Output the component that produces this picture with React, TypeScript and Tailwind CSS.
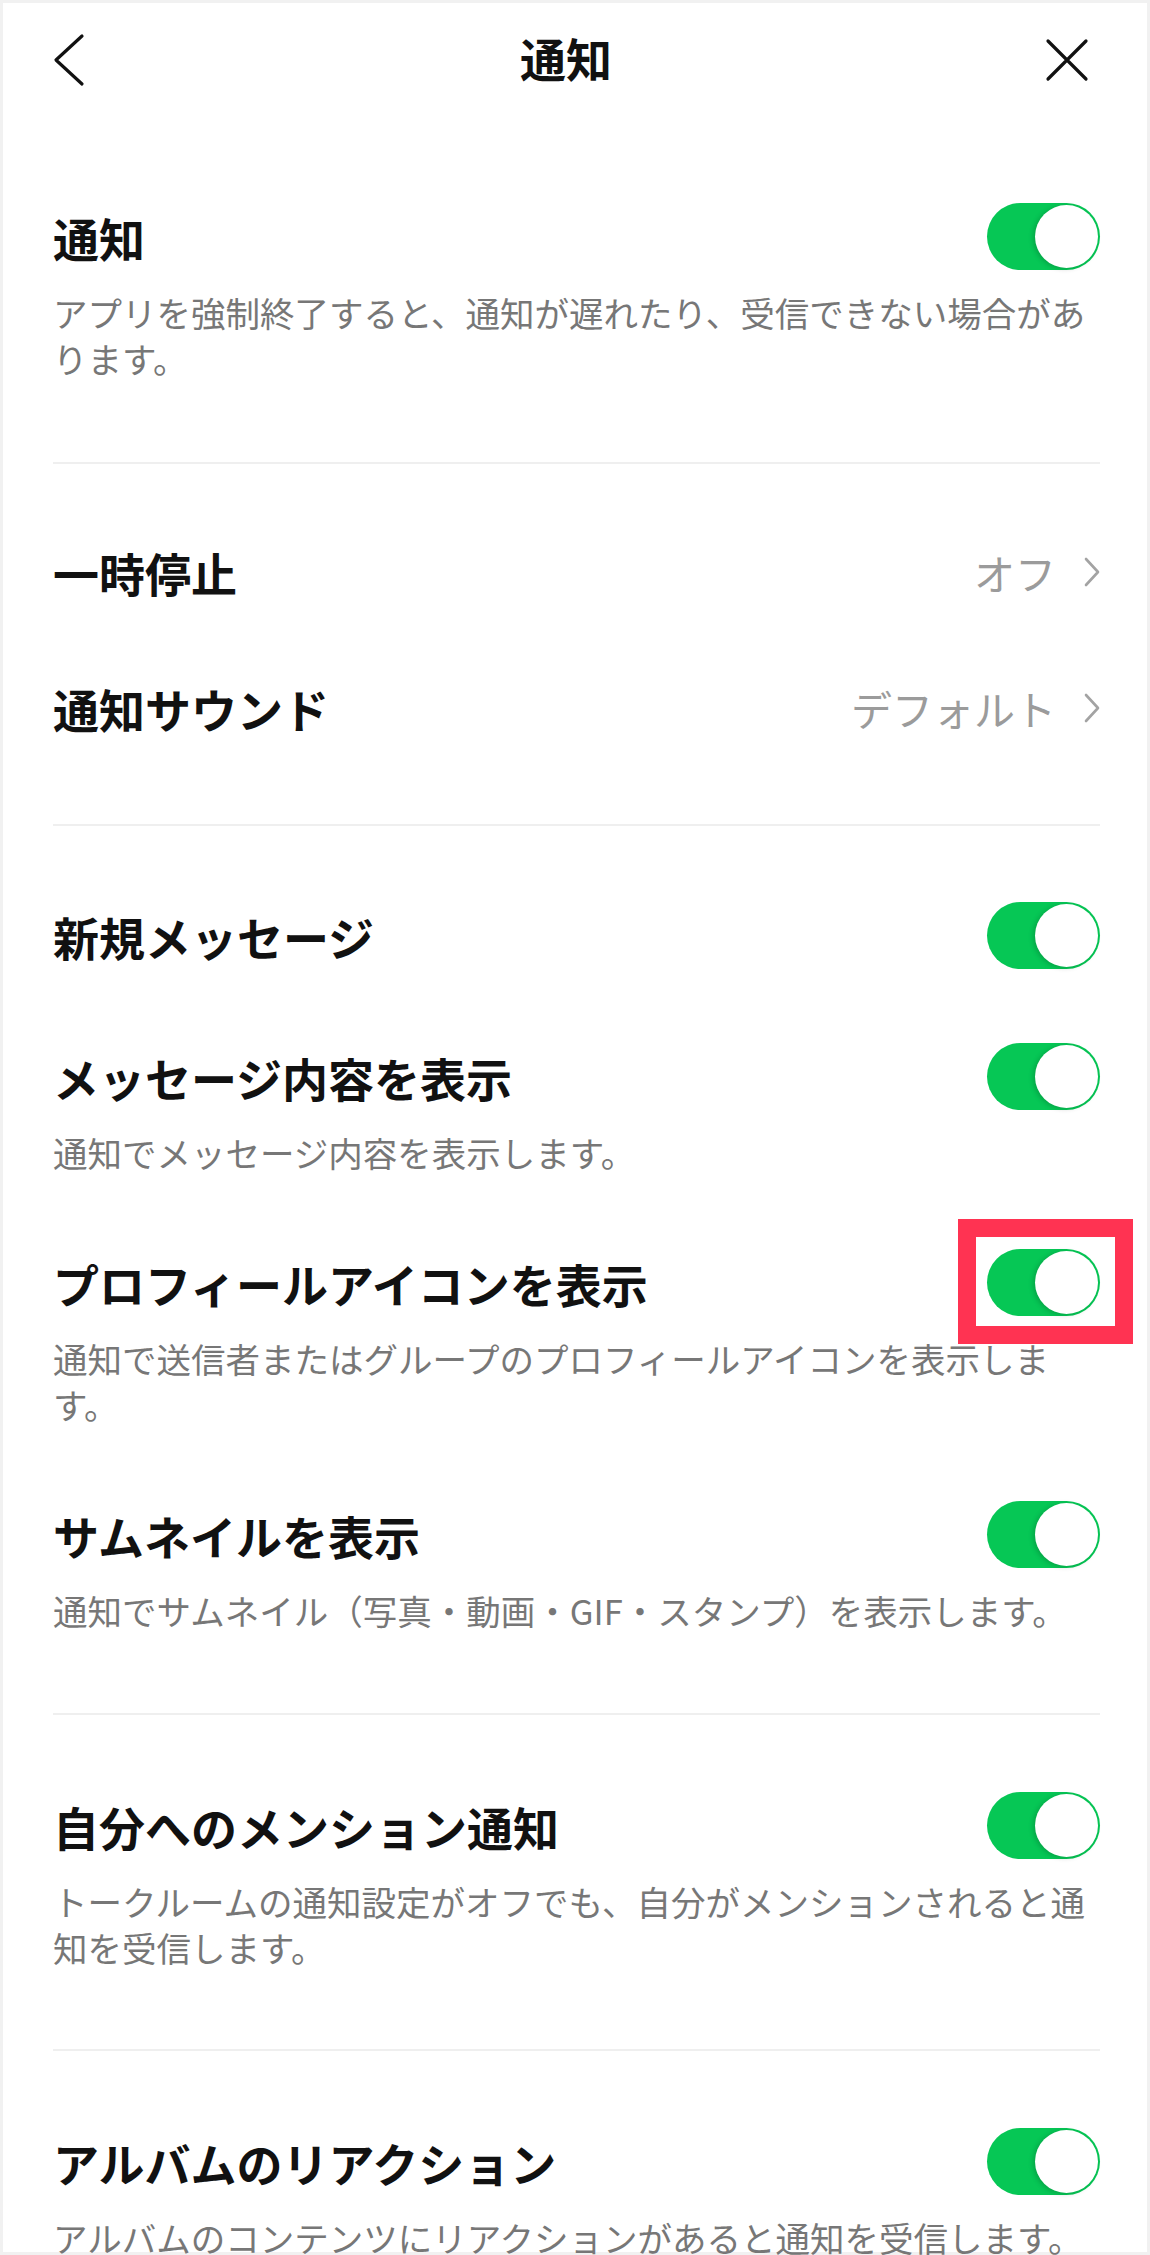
import React from "react";

function Toggle({ highlight = false }: { highlight?: boolean }) {
  return (
    <div className="relative shrink-0">
      <div className="flex h-[67px] w-[113px] items-center justify-end rounded-full bg-[#06c755] p-[2px]">
        <div className="h-[63px] w-[63px] rounded-full bg-white shadow-[-2px_1px_5px_rgba(0,0,0,0.18)]" />
      </div>
      {highlight && (
        <div className="pointer-events-none absolute -left-[29px] -top-[30px] h-[125px] w-[175px] border-[18px] border-[#ff3352]" />
      )}
    </div>
  );
}

function ToggleItem({
  title,
  desc,
  highlight = false,
}: {
  title: string;
  desc?: string;
  highlight?: boolean;
}) {
  return (
    <div className="flex flex-col">
      <div className="flex h-[67px] items-center justify-between">
        <span className="text-[46px] font-bold leading-none text-[#111111]">{title}</span>
        <Toggle highlight={highlight} />
      </div>
      {desc && (
        <p className="mt-[19px] pr-[4px] text-[34.5px] leading-[46px] text-[#777777]">{desc}</p>
      )}
    </div>
  );
}

function Divider() {
  return <div className="h-[2px] w-full bg-[#efefef]" />;
}

function Chevron() {
  return (
    <svg width="16" height="30" viewBox="0 0 16 30" fill="none">
      <path d="M2 2 L14 15 L2 28" stroke="#a3a3a3" strokeWidth="2.6" strokeLinecap="round" strokeLinejoin="round" />
    </svg>
  );
}

function NavRow({ title, value }: { title: string; value: string }) {
  return (
    <div className="flex h-[136px] items-center justify-between">
      <span className="text-[46px] font-bold leading-none text-[#111111]">{title}</span>
      <div className="flex items-center gap-[28px]">
        <span className="text-[41px] leading-none text-[#9b9b9b]">{value}</span>
        <Chevron />
      </div>
    </div>
  );
}

export default function App() {
  return (
    <div className="h-[2255px] w-[1150px] overflow-hidden bg-white font-['Noto_Sans_CJK_JP','Noto_Sans',sans-serif]">
      <div className="h-full w-full border-[3px] border-[#f1f1f1] bg-white">
        {/* Header */}
        <div className="flex h-[113px] items-center justify-between pl-[48px] pr-[58px]">
          <svg width="36" height="56" viewBox="0 0 36 56" fill="none">
            <path d="M31 4 L5 28 L31 52" stroke="#111" strokeWidth="3.2" strokeLinecap="round" strokeLinejoin="round" />
          </svg>
          <span className="mb-[6px] text-[46px] font-bold leading-none text-[#111111]">通知</span>
          <svg width="44" height="44" viewBox="0 0 44 44" fill="none">
            <path d="M3 3 L41 41 M41 3 L3 41" stroke="#111" strokeWidth="3.2" strokeLinecap="round" />
          </svg>
        </div>

        <div className="pl-[50px] pr-[47px]">
          {/* Section 1 */}
          <div className="pb-[81px] pt-[87px]">
            <ToggleItem
              title="通知"
              desc="アプリを強制終了すると、通知が遅れたり、受信できない場合があります。"
            />
          </div>
          <Divider />

          {/* Section 2 */}
          <div className="pb-[48px] pt-[40px]">
            <NavRow title="一時停止" value="オフ" />
            <NavRow title="通知サウンド" value="デフォルト" />
          </div>
          <Divider />

          {/* Section 3 */}
          <div className="flex flex-col gap-[74px] pb-[80px] pt-[76px]">
            <ToggleItem title="新規メッセージ" />
            <ToggleItem title="メッセージ内容を表示" desc="通知でメッセージ内容を表示します。" />
            <ToggleItem
              title="プロフィールアイコンを表示"
              desc="通知で送信者またはグループのプロフィールアイコンを表示します。"
              highlight
            />
            <ToggleItem
              title="サムネイルを表示"
              desc="通知でサムネイル（写真・動画・GIF・スタンプ）を表示します。"
            />
          </div>
          <Divider />

          {/* Section 4 */}
          <div className="pb-[79px] pt-[77px]">
            <ToggleItem
              title="自分へのメンション通知"
              desc="トークルームの通知設定がオフでも、自分がメンションされると通知を受信します。"
            />
          </div>
          <Divider />

          {/* Section 5 */}
          <div className="pb-[40px] pt-[77px]">
            <ToggleItem
              title="アルバムのリアクション"
              desc="アルバムのコンテンツにリアクションがあると通知を受信します。"
            />
          </div>
        </div>
      </div>
    </div>
  );
}
